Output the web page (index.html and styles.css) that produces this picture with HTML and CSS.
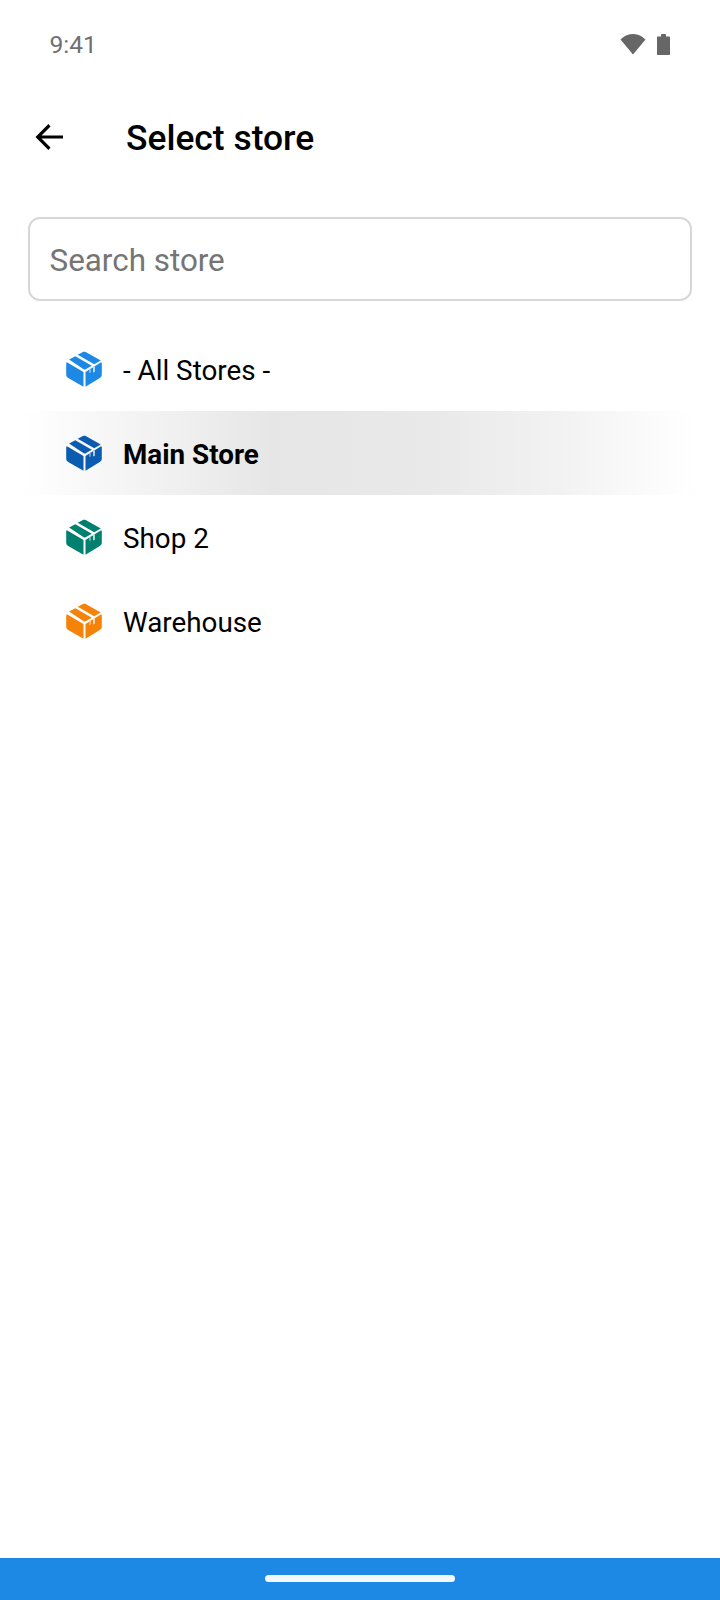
FILE: index.html
```html
<!DOCTYPE html>
<html lang="en">
<head>
<meta charset="utf-8">
<title>Select store</title>
<link rel="stylesheet" href="styles.css">
</head>
<body>
<svg class="defs" width="0" height="0" aria-hidden="true">
  <symbol id="box" viewBox="0 -0.5 36 36">
    <path d="M11.700 3.300 16.900.5c.9-.5 1.900-.5 2.800 0L34.800 9 28.200 12.700z"/>
    <path d="M3.100 8 9.300 4.700 25.800 14.200 19.700 17.800c-.6.300-1.400.3-2 0z"/>
    <path d="M.9 10.700 17.500 20.500V35.200L2.600 26.800C1.100 26 .2 24.600.2 23V12c0-.5.200-.9.700-1.300z"/>
    <path fill-rule="evenodd" d="M19.500 20.500 35.100 10.700c.5.400.7.800.7 1.300V23c0 1.600-.9 3-2.400 3.800L19.500 35.200zM27.300 15.200v5.800l1.400-.8v-5.800zM23.600 17.500v3.900l.8-.4v-4z"/>
  </symbol>
</svg>
<main class="screen">
  <header class="status">
    <span class="time">9:41</span>
    <span class="status-icons">
      <svg class="wifi" viewBox="0 0 26 22"><path d="M13 21.500.5 6.600C1.200 5.900 5.800 1 13 1s11.800 4.900 12.500 5.600z"/></svg>
      <svg class="battery" viewBox="0 0 15 22"><path d="M5 2c0-.6.400-1 1-1h3c.6 0 1 .4 1 1v1.500h3c.6 0 1 .4 1 1V21c0 .6-.4 1-1 1H2c-.6 0-1-.4-1-1V4.500c0-.6.400-1 1-1h3z"/></svg>
    </span>
  </header>
  <div class="toolbar">
    <svg class="back" viewBox="0 0 30 30"><path d="M29 13.400H7.500l9-9L14.400 2 1.500 15l12.900 13 2.100-2.400-9-9H29z"/></svg>
    <h1 class="title">Select store</h1>
  </div>
  <div class="search"><span class="placeholder">Search store</span></div>
  <ul class="list">
    <li class="row"><svg class="icon icon-blue"><use href="#box"/></svg><span class="name">- All Stores -</span></li>
    <li class="row row-selected"><svg class="icon icon-navy"><use href="#box"/></svg><span class="name name-bold">Main Store</span></li>
    <li class="row"><svg class="icon icon-teal"><use href="#box"/></svg><span class="name">Shop 2</span></li>
    <li class="row"><svg class="icon icon-orange"><use href="#box"/></svg><span class="name">Warehouse</span></li>
  </ul>
  <footer class="navbar"><span class="pill"></span></footer>
</main>
</body>
</html>
```

FILE: styles.css
```css
* { box-sizing: border-box; }
html, body { margin: 0; padding: 0; background: #fff; }
body { font-family: Roboto, "Liberation Sans", sans-serif; color: #000; }
.defs { position: absolute; }
.screen { width: 720px; height: 1600px; display: flex; flex-direction: column; }
.status { height: 88px; padding: 0 49px 0 49.500px; display: flex; align-items: center; justify-content: space-between; }
.time { font-size: 24.600px; color: #6f6f6f; }
.status-icons { display: flex; align-items: center; gap: 10px; }
.wifi { width: 26px; height: 22px; fill: #666; display: block; }
.battery { width: 15px; height: 22px; fill: #666; display: block; }
.toolbar { height: 98px; padding-left: 34px; display: flex; align-items: center; gap: 62px; }
.back { width: 30px; height: 30px; fill: #000; display: block; }
.title { margin: 0; font-size: 35.400px; font-weight: 500; padding-top: 1px; }
.search { margin: 31px 28px 0 28px; height: 84px; border: 2px solid #d5d8d8; border-radius: 12px; padding: 2px 0 0 19.500px; display: flex; align-items: center; }
.placeholder { font-size: 31.400px; color: #757575; }
.list { list-style: none; margin: 26px 0 0; padding: 0; }
.row { height: 84px; padding-left: 66px; display: flex; align-items: center; gap: 21px; }
.row-selected { background: linear-gradient(90deg, #fff 3%, #e6e6e6 38%, #e9e9e9 60%, #f2f2f2 78%, #fbfbfb 90%, #fff 97%); }
.icon { width: 36px; height: 36px; display: block; }
.icon-blue { fill: #1e88e5; }
.icon-navy { fill: #0b5cb0; }
.icon-teal { fill: #00806f; }
.icon-orange { fill: #f58209; }
.name { font-size: 27.800px; padding-top: 2px; }
.name-bold { font-weight: 700; }
.navbar { margin-top: auto; height: 42px; background: #1e88e5; display: flex; justify-content: center; padding-top: 17px; }
.pill { width: 190px; height: 7px; border-radius: 4px; background: #f2f8fd; }
```
